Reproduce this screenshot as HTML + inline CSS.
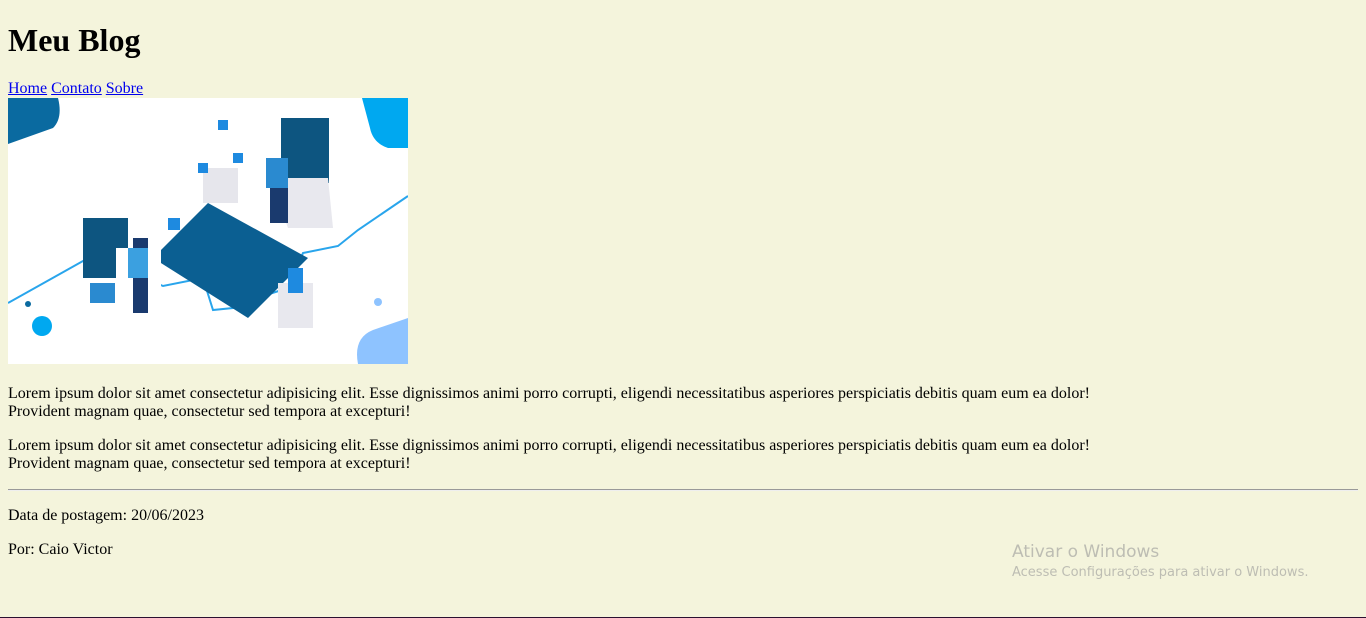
<!DOCTYPE html>
<html><head><meta charset="utf-8"><style>
html,body{margin:0;padding:0}
body{background:#f4f4dc;font-family:"Liberation Serif",serif;font-size:16px;color:#000;padding:8px;width:1350px;height:601px;position:relative;overflow:hidden;border-bottom:1px solid #2a1030;box-sizing:content-box}
h1{font-size:32px;margin:14px 0 21px;line-height:37px}
a{color:#00e}
nav{line-height:18px}
svg{display:block}
.im{padding-bottom:5px}
p{margin:16px 0;line-height:18px}
hr{margin:8px 0;border:0;border-top:1px solid #999;border-bottom:1px solid #eee}
.wm{position:absolute;left:1012px;top:540px;font-family:"DejaVu Sans",sans-serif;color:#bdbdb3}
.wm .a{font-size:17px;line-height:24px}
.wm .b{font-size:13px;line-height:18px}
</style></head><body>
<h1>Meu Blog</h1>
<nav><a href="#">Home</a> <a href="#">Contato</a> <a href="#">Sobre</a></nav>
<div class="im"><svg width="400" height="266" viewBox="0 0 400 266">
<rect width="400" height="266" fill="#fff"/>
<path d="M0 0H50Q55 20 45 30L0 46Z" fill="#0a6aa0"/>
<path d="M354 0H400V50H380Q365 45 362 30Z" fill="#00a8f0"/>
<path d="M400 220V266H350Q345 240 365 232Z" fill="#8ec3ff"/>
<circle cx="34" cy="228" r="10" fill="#00a8f0"/>
<circle cx="20" cy="206" r="3" fill="#0a6aa0"/>
<circle cx="370" cy="204" r="4" fill="#8ec3ff"/>
<path d="M0 205L75 163L110 180L130 177L155 188L195 180L205 212L225 210L255 198L280 190L295 155L330 148L350 132L400 98" fill="none" stroke="#29a5ec" stroke-width="2"/>
<path d="M145 160L200 105L300 160L240 220Z" fill="#0b5f92"/>
<rect x="75" y="120" width="45" height="60" fill="#0d5580"/>
<rect x="273" y="20" width="48" height="65" fill="#0d5580"/>
<path d="M262 80L320 80L325 130L280 130Z" fill="#e8e8ee"/>
<rect x="195" y="70" width="35" height="35" fill="#e6e6ec"/>
<rect x="108" y="150" width="45" height="70" fill="#fff"/>
<rect x="125" y="140" width="15" height="75" fill="#1a3a6e"/>
<rect x="120" y="150" width="20" height="30" fill="#3ba0e0"/>
<rect x="262" y="60" width="18" height="65" fill="#1a3a6e"/>
<rect x="258" y="60" width="22" height="30" fill="#2a8ad0"/>
<rect x="270" y="185" width="35" height="45" fill="#e8e8ee"/>
<rect x="280" y="170" width="15" height="25" fill="#1e8ae0"/>
<rect x="82" y="185" width="25" height="20" fill="#2a8ad0"/>
<rect x="160" y="120" width="12" height="12" fill="#1e8ae0"/>
<rect x="210" y="22" width="10" height="10" fill="#1e8ae0"/>
<rect x="225" y="55" width="10" height="10" fill="#1e8ae0"/>
<rect x="190" y="65" width="10" height="10" fill="#1e8ae0"/>
</svg></div>
<p>Lorem ipsum dolor sit amet consectetur adipisicing elit. Esse dignissimos animi porro corrupti, eligendi necessitatibus asperiores perspiciatis debitis quam eum ea dolor!<br>Provident magnam quae, consectetur sed tempora at excepturi!</p>
<p>Lorem ipsum dolor sit amet consectetur adipisicing elit. Esse dignissimos animi porro corrupti, eligendi necessitatibus asperiores perspiciatis debitis quam eum ea dolor!<br>Provident magnam quae, consectetur sed tempora at excepturi!</p>
<hr>
<p>Data de postagem: 20/06/2023</p>
<p>Por: Caio Victor</p>
<div class="wm"><div class="a">Ativar o Windows</div><div class="b">Acesse Configurações para ativar o Windows.</div></div>
</body></html>
